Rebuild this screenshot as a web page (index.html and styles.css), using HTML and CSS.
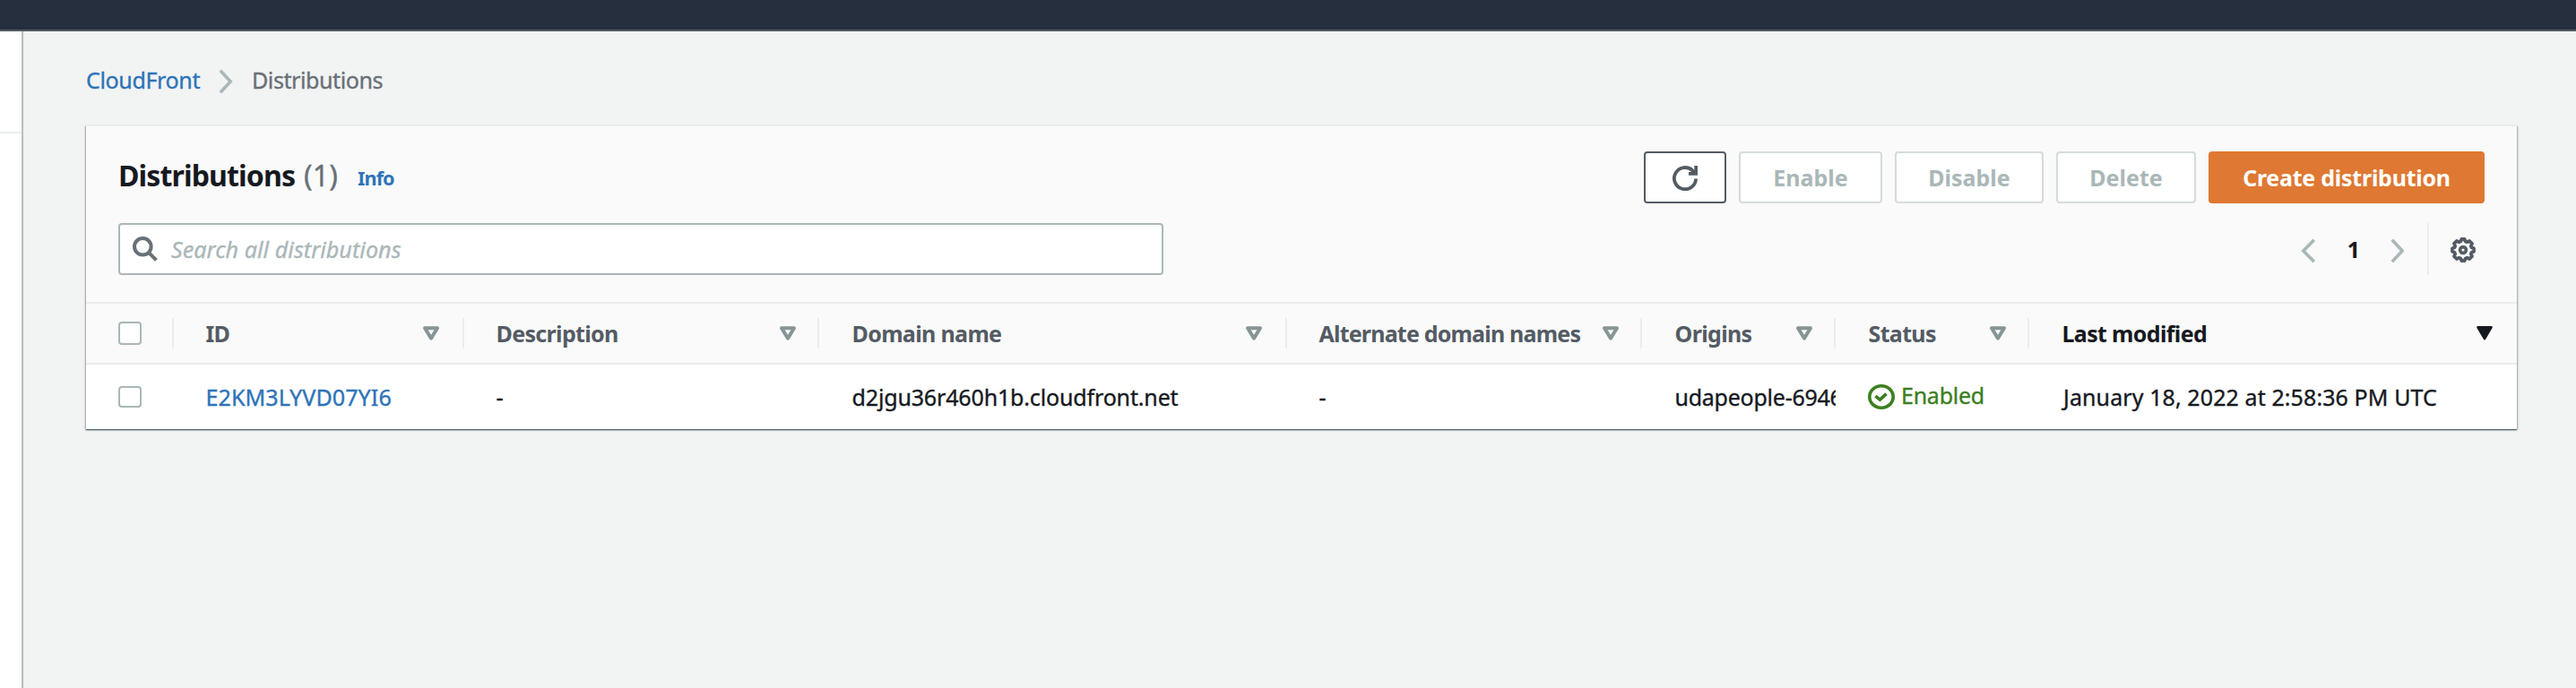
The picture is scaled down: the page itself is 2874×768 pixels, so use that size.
FILE: index.html
```html
<!DOCTYPE html>
<html lang="en">
<head>
<meta charset="utf-8">
<title>CloudFront Distributions</title>
<link rel="stylesheet" href="styles.css">
</head>
<body>
<svg class="defs" width="0" height="0">
  <symbol id="sort" viewBox="0 0 20 18"><path d="M3 3.2h14L10 14.6z" fill="none" stroke="currentColor" stroke-width="4" stroke-linejoin="round"/></symbol>
  <symbol id="sort-fill" viewBox="0 0 20 18"><path d="M2.5 2.4h15L10 15.2z" fill="currentColor" stroke="currentColor" stroke-width="2.6" stroke-linejoin="round"/></symbol>
  <symbol id="right" viewBox="0 0 16 28"><path d="M1.8 1.8L13.2 14 1.8 26.2" fill="none" stroke="currentColor" stroke-width="3.6"/></symbol>
  <symbol id="left" viewBox="0 0 16 28"><path d="M14.8 1.8L2.8 14l12 12.2" fill="none" stroke="currentColor" stroke-width="3.6"/></symbol>
</svg>
<header class="topbar"></header>
<div class="shell">
  <aside class="sidebar"></aside>
  <main class="main">
    <nav class="breadcrumb">
      <a class="t-cf">CloudFront</a>
      <svg class="chev"><use href="#right"/></svg>
      <span class="t-bc">Distributions</span>
    </nav>
    <section class="card">
      <div class="card-head">
        <div class="title-row">
          <h1 class="title">Distributions</h1>
          <span class="count">(1)</span>
          <a class="info">Info</a>
          <div class="actions">
            <button class="btn refresh">
              <svg width="28" height="28" viewBox="0 0 28 28" fill="none" stroke="currentColor" stroke-width="3.8"><path d="M26.1 14.5A12.1 12.1 0 1 1 22.6 5.6l3 3.2"/><path d="M26.2 0v8.8H18"/></svg>
            </button>
            <button class="btn disabled w-enable">Enable</button>
            <button class="btn disabled w-disable">Disable</button>
            <button class="btn disabled w-delete">Delete</button>
            <button class="btn primary">Create distribution</button>
          </div>
        </div>
        <div class="filter-row">
          <div class="search">
            <svg width="28" height="28" viewBox="0 0 28 28" fill="none" stroke="currentColor" stroke-width="4"><circle cx="11.3" cy="11.3" r="9.3"/><path d="M17.8 17.8l8.6 8.6"/></svg>
            <span class="placeholder">Search all distributions</span>
          </div>
          <div class="pager">
            <svg class="chev"><use href="#left"/></svg>
            <span class="page">1</span>
            <svg class="chev"><use href="#right"/></svg>
            <div class="settings">
              <svg width="28" height="28" viewBox="0 0 28 28" fill="none" stroke="currentColor" stroke-width="3.8" stroke-linejoin="round"><circle cx="14" cy="14" r="3.4" stroke-width="3.6"/><path d="M12.300 2h3.400l1 2.500 1.800.700 2.600-1.200 2.900 2.900-1.200 2.600.700 1.800 2.500 1v3.400l-2.500 1-.700 1.800 1.200 2.600-2.900 2.900-2.600-1.200-1.800.700-1 2.500h-3.400l-1-2.500-1.800-.700L6.900 24 4 21.100l1.200-2.600-.7-1.800-2.500-1v-3.400l2.500-1 .7-1.800L4 6.900 6.900 4l2.600 1.200 1.800-.7z"/></svg>
            </div>
          </div>
        </div>
      </div>
      <div class="grid head">
        <div class="cell check"><i class="box"></i></div>
        <div class="cell wide-end"><span>ID</span><svg class="tri"><use href="#sort"/></svg></div>
        <div class="cell"><span>Description</span><svg class="tri"><use href="#sort"/></svg></div>
        <div class="cell wide-end nudge"><span>Domain name</span><svg class="tri"><use href="#sort"/></svg></div>
        <div class="cell"><span class="t-alt">Alternate domain names</span><svg class="tri"><use href="#sort"/></svg></div>
        <div class="cell nudge"><span>Origins</span><svg class="tri"><use href="#sort"/></svg></div>
        <div class="cell nudge"><span>Status</span><svg class="tri"><use href="#sort"/></svg></div>
        <div class="cell nudge sorted"><span>Last modified</span><svg class="tri"><use href="#sort-fill"/></svg></div>
      </div>
      <div class="grid row">
        <div class="cell check"><i class="box short"></i></div>
        <div class="cell"><a class="t-id">E2KM3LYVD07YI6</a></div>
        <div class="cell">-</div>
        <div class="cell t-domain">d2jgu36r460h1b.cloudfront.net</div>
        <div class="cell">-</div>
        <div class="cell t-origin">udapeople-6946</div>
        <div class="cell status">
          <svg width="30" height="28" viewBox="0 0 30 28" fill="none" stroke="currentColor" stroke-width="3.6"><ellipse cx="15" cy="14" rx="13.2" ry="12.2"/><path d="M8.400 13.200l5 4 7.200-6.600"/></svg>
          <span>Enabled</span>
        </div>
        <div class="cell t-date">January 18, 2022 at 2:58:36 PM UTC</div>
      </div>
    </section>
  </main>
</div>
</body>
</html>
```
FILE: styles.css
```css
* { box-sizing: border-box; }
body {
  margin: 0;
  height: 768px;
  overflow: hidden;
  display: flex;
  flex-direction: column;
  background: #f2f3f3;
  color: #16191f;
  font: 25px/34px "Noto Sans", "Open Sans", sans-serif;
  -webkit-text-stroke: .35px currentColor;
}
.defs { position: absolute; }
.topbar { height: 35px; flex: none; background: #262f3e; border-bottom: 2px solid #545b64; }
.shell { flex: 1; display: flex; }
.sidebar {
  width: 24px;
  background: linear-gradient(#eaeded, #eaeded) 0 112px / 100% 2px no-repeat #fff;
  box-shadow: 1px 1px 1px 1px #b9c0c0;
  clip-path: inset(0 -4px 0 0);
}
.main { flex: 1; padding: 37px 66px 0 72px; }
a { color: #2e73b8; }

.breadcrumb { display: flex; align-items: center; height: 34px; color: #687078; }
.chev { width: 16px; height: 28px; color: #aab7b8; flex: none; }
.breadcrumb .chev { margin: 4px 21px 0 20px; }
.t-cf { width: 128px; letter-spacing: -.35px; }
.t-bc { letter-spacing: -.4px; }

.card {
  margin-top: 34px;
  background: #fff;
  border-top: 1px solid #eaeded;
  box-shadow: 0 1px 1px 0 rgba(0, 28, 36, .45), 1px 1px 2px 0 rgba(0, 28, 36, .3), -1px 1px 2px 0 rgba(0, 28, 36, .3);
}
.card-head { background: #fafafa; padding: 28px 36px 30px; border-bottom: 2px solid #eaeded; }
.title-row { display: flex; align-items: center; height: 58px; }
.title { margin: -5px 0 0; width: 205px; font-size: 32px; letter-spacing: -.85px; white-space: nowrap; -webkit-text-stroke: 0; }
.count { margin: -5px 0 0 2px; font-size: 32px; color: #687078; letter-spacing: .2px; }
.info { margin: 2px 0 0 22px; font-size: 21.5px; font-weight: 700; letter-spacing: -.9px; -webkit-text-stroke: 0; }
.actions { margin-left: auto; display: flex; gap: 14px; }
.btn {
  height: 58px;
  padding: 0;
  border: 2px solid #545b64;
  border-radius: 4px;
  background: #fff;
  color: #545b64;
  font: 700 25px/34px "Noto Sans", sans-serif;
  -webkit-text-stroke: 0;
  display: flex;
  align-items: center;
  justify-content: center;
}
.refresh { width: 92px; padding-top: 2px; }
.disabled { border-color: #d5dbdb; color: #aab7b8; padding-bottom: 1px; }
.w-enable { width: 160px; }
.w-disable { width: 166px; }
.w-delete { width: 156px; }
.primary { width: 308px; border-color: #df7832; background: #df7832; color: #fff; letter-spacing: -.25px; padding-bottom: 1px; }

.filter-row { display: flex; margin-top: 22px; height: 58px; }
.search {
  width: 1166px;
  border: 2px solid #aab7b8;
  border-radius: 4px;
  background: #fff;
  display: flex;
  align-items: center;
  padding-left: 14px;
  color: #687078;
}
.placeholder { margin-left: 15px; color: #aab7b8; font-style: italic; letter-spacing: .1px; }
.pager { margin-left: auto; display: flex; align-items: center; }
.pager .chev { margin-top: 3px; }
.page { width: 84px; padding-left: 2px; text-align: center; font-weight: 700; -webkit-text-stroke: 0; }
.settings {
  height: 58px;
  margin-left: 25px;
  padding: 2px 10px 0 24px;
  border-left: 2px solid #eaeded;
  display: flex;
  align-items: center;
  color: #545b64;
}

.grid { display: grid; grid-template-columns: 98px 324px 396px 522px 396px 216px 216px 544px; }
.cell { display: flex; align-items: center; padding: 0 0 0 35.5px; white-space: nowrap; overflow: hidden; }
.check { padding-left: 36px; }
.box { width: 26px; height: 26px; border: 2px solid #aab7b8; border-radius: 4px; background: #fff; }
.short { height: 24px; }
.head { height: 68px; background: #fafafa; border-bottom: 2px solid #eaeded; color: #545b64; font-weight: 700; letter-spacing: -.65px; -webkit-text-stroke: 0; }
.head .cell {
  justify-content: space-between;
  padding-right: 25px;
  padding-bottom: 1px;
  background: linear-gradient(#eaeded, #eaeded) right 16px / 2px 34px no-repeat;
}
.head .nudge { padding-left: 36.5px; }
.head .wide-end { padding-right: 27px; }
.head .sorted { background: none; color: #16191f; padding-right: 26px; }
.head .t-alt { letter-spacing: -.8px; }
.tri { width: 20px; height: 18px; color: #879596; flex: none; }
.sorted .tri { color: #16191f; }
.row { height: 72px; }
.t-id { letter-spacing: .1px; }
.t-domain { letter-spacing: -.15px; padding-left: 36.5px; }
.t-origin { letter-spacing: -.25px; padding-left: 36.5px; }
.status { color: #3c7f20; gap: 7px; padding: 0 0 0 36px; letter-spacing: -.25px; }
.status span { margin-top: -4px; }
.t-date { padding-left: 38px; letter-spacing: .1px; }
```
